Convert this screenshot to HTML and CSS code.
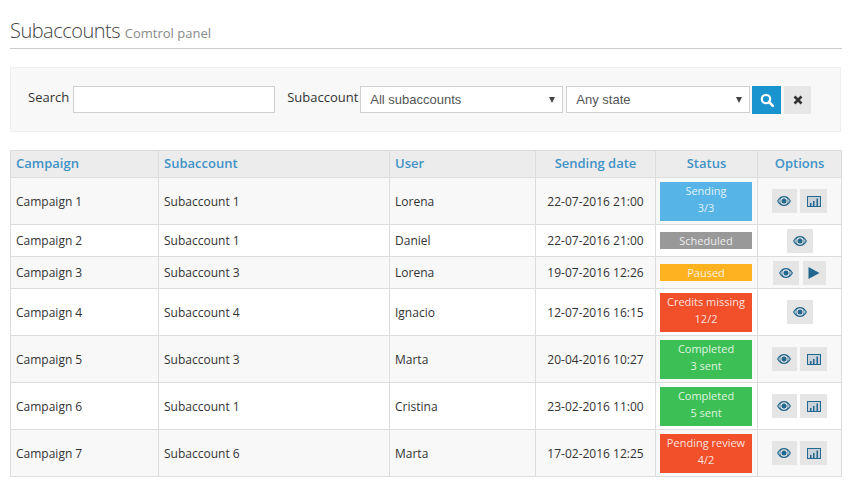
FILE: index.html
```html
<!DOCTYPE html>
<html lang="en">
<head>
    <meta charset="UTF-8">
    <title>Subaccounts</title>
    <link rel="stylesheet" href="styles.css">
</head>
<body>

<svg class="defs" width="0" height="0">
    <symbol id="i-eye" viewBox="0 0 14 10">
        <path fill="currentColor" fill-rule="evenodd" d="M7 0C4 0 1.600 1.900 0 5c1.600 3.100 4 5 7 5s5.400-1.900 7-5C12.400 1.900 10 0 7 0zM7 1.300A3.700 3.700 0 1 1 7 8.700 3.700 3.700 0 0 1 7 1.300zM1.300 5C2 3.900 2.800 3 3.900 2.400 3.100 3.100 2.600 4 2.600 5s.5 1.900 1.300 2.600C2.800 7 2 6.100 1.300 5zM12.700 5c-.7 1.100-1.500 2-2.600 2.600.8-.7 1.300-1.600 1.300-2.600s-.5-1.900-1.300-2.600C11.200 3 12 3.900 12.700 5z"/>
        <circle cx="7" cy="5" r="2.500" fill="currentColor"/>
    </symbol>
    <symbol id="i-chart" viewBox="0 0 14 11">
        <rect x=".5" y=".5" width="13" height="10" fill="currentColor" fill-opacity=".15" stroke="currentColor"/>
        <path fill="currentColor" d="M3 7h1.500v3H3zM6 5h1.500v5H6zM9.500 2.500H11V10H9.500z"/>
    </symbol>
</svg>

<div class="page-title">
    <h1>Subaccounts <small>Comtrol panel</small></h1>
</div>

<form class="filters">
    <label class="lbl-search">Search</label>
    <input type="text" class="txt-search">
    <label class="lbl-sub">Subaccount</label>
    <div class="sel sel-sub">All subaccounts</div>
    <div class="sel sel-state">Any state</div>
    <button type="button" class="btn-search">
        <svg width="14" height="14" viewBox="0 0 14 14"><circle cx="6" cy="6" r="4.200" fill="none" stroke="#fff" stroke-width="2.200"/><path d="M9 9l3.800 3.800" stroke="#fff" stroke-width="2.600" stroke-linecap="round"/></svg>
    </button>
    <button type="button" class="btn-clear">
        <svg width="10" height="10" viewBox="0 0 10 10"><path d="M1.500 1.500l7 7M8.500 1.500l-7 7" stroke="#333" stroke-width="2.600"/></svg>
    </button>
</form>

<table class="list">
    <colgroup>
        <col class="c1"><col class="c2"><col class="c3"><col class="c4"><col class="c5"><col class="c6">
    </colgroup>
    <thead>
        <tr>
            <th>Campaign</th>
            <th>Subaccount</th>
            <th>User</th>
            <th class="mid">Sending date</th>
            <th class="mid">Status</th>
            <th class="mid">Options</th>
        </tr>
    </thead>
    <tbody>
        <tr class="tall">
            <td>Campaign 1</td><td>Subaccount 1</td><td>Lorena</td>
            <td class="mid">22-07-2016 21:00</td>
            <td class="st"><div class="badge blue">Sending<br>3/3</div></td>
            <td class="mid">
                <a class="op w25"><svg width="14" height="10"><use href="#i-eye"/></svg></a>
                <a class="op w27"><svg width="14" height="11"><use href="#i-chart"/></svg></a>
            </td>
        </tr>
        <tr class="short">
            <td>Campaign 2</td><td>Subaccount 1</td><td>Daniel</td>
            <td class="mid">22-07-2016 21:00</td>
            <td class="st"><div class="badge grey">Scheduled</div></td>
            <td class="mid"><a class="op"><svg width="14" height="10"><use href="#i-eye"/></svg></a></td>
        </tr>
        <tr class="short">
            <td>Campaign 3</td><td>Subaccount 3</td><td>Lorena</td>
            <td class="mid">19-07-2016 12:26</td>
            <td class="st"><div class="badge yellow">Paused</div></td>
            <td class="mid">
                <a class="op"><svg width="14" height="10"><use href="#i-eye"/></svg></a>
                <a class="op w23"><svg width="12" height="12" viewBox="0 0 12 12"><path fill="currentColor" d="M.5 0L11.500 6 .5 12z"/></svg></a>
            </td>
        </tr>
        <tr class="tall">
            <td>Campaign 4</td><td>Subaccount 4</td><td>Ignacio</td>
            <td class="mid">12-07-2016 16:15</td>
            <td class="st"><div class="badge red">Credits missing<br>12/2</div></td>
            <td class="mid"><a class="op"><svg width="14" height="10"><use href="#i-eye"/></svg></a></td>
        </tr>
        <tr class="tall">
            <td>Campaign 5</td><td>Subaccount 3</td><td>Marta</td>
            <td class="mid">20-04-2016 10:27</td>
            <td class="st"><div class="badge green">Completed<br>3 sent</div></td>
            <td class="mid">
                <a class="op w25"><svg width="14" height="10"><use href="#i-eye"/></svg></a>
                <a class="op w27"><svg width="14" height="11"><use href="#i-chart"/></svg></a>
            </td>
        </tr>
        <tr class="tall">
            <td>Campaign 6</td><td>Subaccount 1</td><td>Cristina</td>
            <td class="mid">23-02-2016 11:00</td>
            <td class="st"><div class="badge green">Completed<br>5 sent</div></td>
            <td class="mid">
                <a class="op w25"><svg width="14" height="10"><use href="#i-eye"/></svg></a>
                <a class="op w27"><svg width="14" height="11"><use href="#i-chart"/></svg></a>
            </td>
        </tr>
        <tr class="tall">
            <td>Campaign 7</td><td>Subaccount 6</td><td>Marta</td>
            <td class="mid">17-02-2016 12:25</td>
            <td class="st"><div class="badge red">Pending review<br>4/2</div></td>
            <td class="mid">
                <a class="op w25"><svg width="14" height="10"><use href="#i-eye"/></svg></a>
                <a class="op w27"><svg width="14" height="11"><use href="#i-chart"/></svg></a>
            </td>
        </tr>
    </tbody>
</table>

</body>
</html>
```

FILE: styles.css
```css
*{margin: 0; padding: 0; box-sizing: border-box;}
html,body{
    height: 100%;
}
body{
    padding: 0 8px 0 10px;
    background: #fff;
    color: #333;
    font-family: "Open Sans", "Liberation Sans", sans-serif;
    font-size: 12px;
    overflow: hidden;
}
.defs{
    position: absolute;
}
.page-title{
    height: 49px;
    padding-top: 18px;
    border-bottom: 1px solid #ccc;
}
.page-title h1{
    font-size: 20px;
    line-height: 26px;
    font-weight: 300;
    color: #444;
    letter-spacing: -0.5px;
}
.page-title small{
    font-size: 13px;
    font-weight: 400;
    color: #8a8a8a;
    letter-spacing: 0;
}
.filters{
    display: flex;
    align-items: center;
    width: 831px;
    height: 65px;
    margin-top: 18px;
    padding-left: 17px;
    background: #f8f8f8;
    border: 1px solid #eee;
}
.filters label{
    font-size: 13px;
    color: #333;
    margin-top: -6px;
}
.txt-search{
    width: 202px;
    height: 27px;
    margin-left: 4px;
    background: #fff;
    border: 1px solid #d0d0d0;
}
.lbl-sub{
    margin-left: 12px;
}
.sel{
    position: relative;
    height: 27px;
    line-height: 26px;
    padding-left: 9px;
    background: #fff;
    border: 1px solid #d0d0d0;
    color: #555;
    font-family: "Liberation Sans", sans-serif;
    font-size: 13px;
}
.sel:after{
    content: "";
    position: absolute;
    right: 7px;
    top: 10px;
    border-top: 6px solid #444;
    border-left: 3px solid transparent;
    border-right: 3px solid transparent;
}
.sel-sub{
    width: 203px;
    margin-left: 2px;
}
.sel-state{
    width: 184px;
    margin-left: 3px;
}
.filters button{
    display: flex;
    align-items: center;
    justify-content: center;
    height: 28px;
    border: none;
}
.btn-search{
    width: 29px;
    margin-left: 2px;
    background: #1a94cf;
}
.btn-clear{
    width: 27px;
    margin-left: 3px;
    background: #e6e6e6;
}
.list{
    width: 831px;
    margin-top: 18px;
    table-layout: fixed;
    border-collapse: collapse;
}
.c1{width: 148px;}
.c2{width: 231px;}
.c3{width: 146px;}
.c4{width: 120px;}
.c5{width: 102px;}
.c6{width: 84px;}
.list th,.list td{
    border: 1px solid #ddd;
    padding: 0 5px;
    text-align: left;
    vertical-align: middle;
}
.list th{
    height: 27px;
    padding-bottom: 2px;
    background: #ececec;
    color: #3f92c6;
    font-size: 13px;
    font-weight: 600;
}
.list td{
    color: #333;
    font-size: 12px;
}
.list tbody tr:nth-child(odd){
    background: #f8f8f8;
}
.list .mid{
    text-align: center;
}
.tall td{
    height: 47px;
}
.short td{
    height: 32px;
}
.list .st{
    padding: 0 4px;
}
.badge{
    width: 92px;
    padding-bottom: 4px;
    color: rgba(255,255,255,0.85);
    font-size: 11px;
    line-height: 17.500px;
    text-align: center;
}
.short .badge{
    padding: 0;
    line-height: 17px;
}
.blue{background: #56b4e6;}
.grey{background: #999;}
.yellow{background: #fdb220;}
.red{background: #f1502a;}
.green{background: #3cc055;}
.op{
    display: inline-flex;
    align-items: center;
    justify-content: center;
    width: 26px;
    height: 24px;
    vertical-align: middle;
    background: #e5e5e5;
    color: #22678f;
}
.w25{
    width: 25px;
}
.w27{
    width: 27px;
}
.w23{
    width: 23px;
}
```
